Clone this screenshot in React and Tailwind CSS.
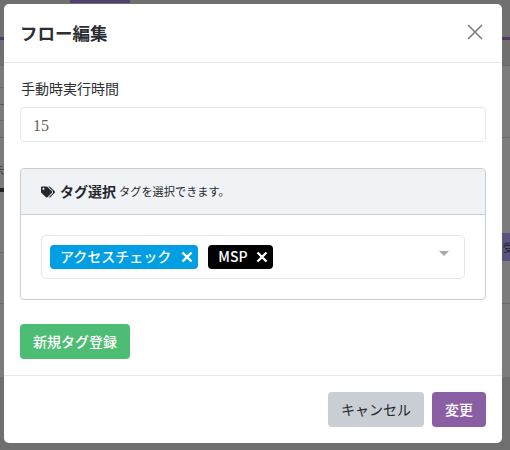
import React from 'react';
import { FaTags } from 'react-icons/fa';

const font = { fontFamily: '"Noto Sans CJK JP", "Noto Sans", sans-serif' };

const Tag = ({ label, className, iconClass }) => (
  <span className={`h-6 flex items-center rounded-[4px] text-white text-[14px] font-medium ${className}`}>
    <span className="-mt-[2px]">{label}</span>
    <svg width="12" height="12" viewBox="0 0 12 12" className={iconClass}>
      <path d="M1.5 1.5 L10.5 10.5 M10.5 1.5 L1.5 10.5" stroke="white" strokeWidth="2.4" />
    </svg>
  </span>
);

const Backdrop = () => (
  <div className="absolute inset-0 bg-[#7c7c7c]">
    {/* what shows of the page behind the dialog */}
    <div className="absolute left-0 right-0 top-0 h-[65px] bg-[#707070]" />
    <div className="absolute left-0 right-0 top-[377px] bottom-0 bg-[#6f6f6f]" />
    <div className="absolute left-0 right-0 top-[37px] h-[3px] bg-[#4f3a66]" />
    <div className="absolute left-0 right-0 top-[65px] h-px bg-[#6a6a6a]" />
    <div className="absolute left-0 w-1 top-[87px] h-px bg-[#6a6a6a]" />
    <div className="absolute left-0 w-1 top-[104px] h-px bg-[#5a5580]" />
    <div className="absolute left-0 w-1 top-[120px] h-px bg-[#6a6a6a]" />
    <div className="absolute left-0 right-0 top-[137px] h-px bg-[#6a6a6a]" />
    <div className="absolute left-0 right-0 top-[252px] h-px bg-[#6a6a6a]" />
    <div className="absolute left-0 right-0 top-[303px] h-px bg-[#6a6a6a]" />
    <div className="absolute -left-[7px] top-[162px] text-[11px] leading-4 text-[#333]">示</div>
    <div className="absolute left-0 w-1 top-[188px] h-1 bg-[#222]" />
    <div className="absolute right-0 w-2 top-[233px] h-7 bg-[#5a5580] overflow-hidden">
      <span className="absolute left-[1px] top-[6px] text-[11px] leading-4 text-[#222]">受</span>
    </div>
    <div className="absolute left-[70px] w-[60px] top-0 h-[3px] bg-[#54406c]" />
  </div>
);

export default function App() {
  return (
    <div className="relative w-[510px] h-[450px] overflow-hidden pt-1 pl-1" style={font}>
      <Backdrop />
      <div className="relative w-[498px] h-[439px] bg-white rounded-[5px] flex flex-col text-[#212529]">
        <div className="h-[59px] flex items-center justify-between pl-4 pr-[19px] border-b border-[#e4e7ea]">
          <h5 className="text-[17.5px] font-bold text-[#2b2f33]">フロー編集</h5>
          <svg width="16" height="16" viewBox="0 0 16 16" className="mb-[3px]">
            <path d="M1 1 L15 15 M15 1 L1 15" stroke="#7b7b7b" strokeWidth="1.6" />
          </svg>
        </div>

        <div className="flex-1 px-4 flex flex-col">
          <label className="mt-[15px] h-[21px] leading-[21px] text-[14px] pl-px text-[#2b2f33]">手動時実行時間</label>
          <div
            className="mt-2 h-[35px] border border-[#e4e7ea] rounded-[4px] flex items-center pl-[12px] pt-[2px] text-[16px] text-[#6b6259]"
            style={{ fontFamily: '"Liberation Serif", serif' }}
          >
            15
          </div>

          <div className="mt-[26px] h-[132px] border border-[#c8ced3] rounded-[4px] flex flex-col">
            <div className="h-[46px] bg-[#f0f3f5] border-b border-[#c8ced3] rounded-t-[4px] flex items-center pl-5 shrink-0">
              <FaTags className="text-[#23282c] text-[14px] mr-[5px]" />
              <strong className="text-[14px] font-bold text-[#23282c]">タグ選択</strong>
              <span className="text-[11.2px] ml-[3px] text-[#23282c]">タグを選択できます。</span>
            </div>
            <div className="px-5 pt-5">
              <div className="relative h-[44px] border border-[#e4e7ea] rounded-[5px] flex items-center pl-2 gap-[10px]">
                <Tag label="アクセスチェック" className="bg-[#009fe3] pl-[10px] pr-[5px]" iconClass="ml-[10px]" />
                <Tag label="MSP" className="bg-black pl-[10px] pr-[5px]" iconClass="ml-[8px]" />
                <div className="absolute right-[15px] top-[15px] w-0 h-0 border-l-[5px] border-r-[5px] border-t-[5px] border-l-transparent border-r-transparent border-t-[#a8a8a8]" />
              </div>
            </div>
          </div>

          <button className="mt-6 w-[110px] h-[35px] bg-[#4dbd74] rounded-[4px] text-white text-[14px] font-medium">
            新規タグ登録
          </button>
        </div>

        <div className="h-[68px] border-t border-[#e4e7ea] flex justify-end items-start gap-2 pt-4 pr-4">
          <button className="w-[96px] h-[35px] bg-[#c8ced3] rounded-[4px] text-[#23282c] text-[14px]">キャンセル</button>
          <button className="w-[54px] h-[35px] bg-[#8a5ea2] rounded-[4px] text-white text-[14px] font-medium">変更</button>
        </div>
      </div>
    </div>
  );
}
